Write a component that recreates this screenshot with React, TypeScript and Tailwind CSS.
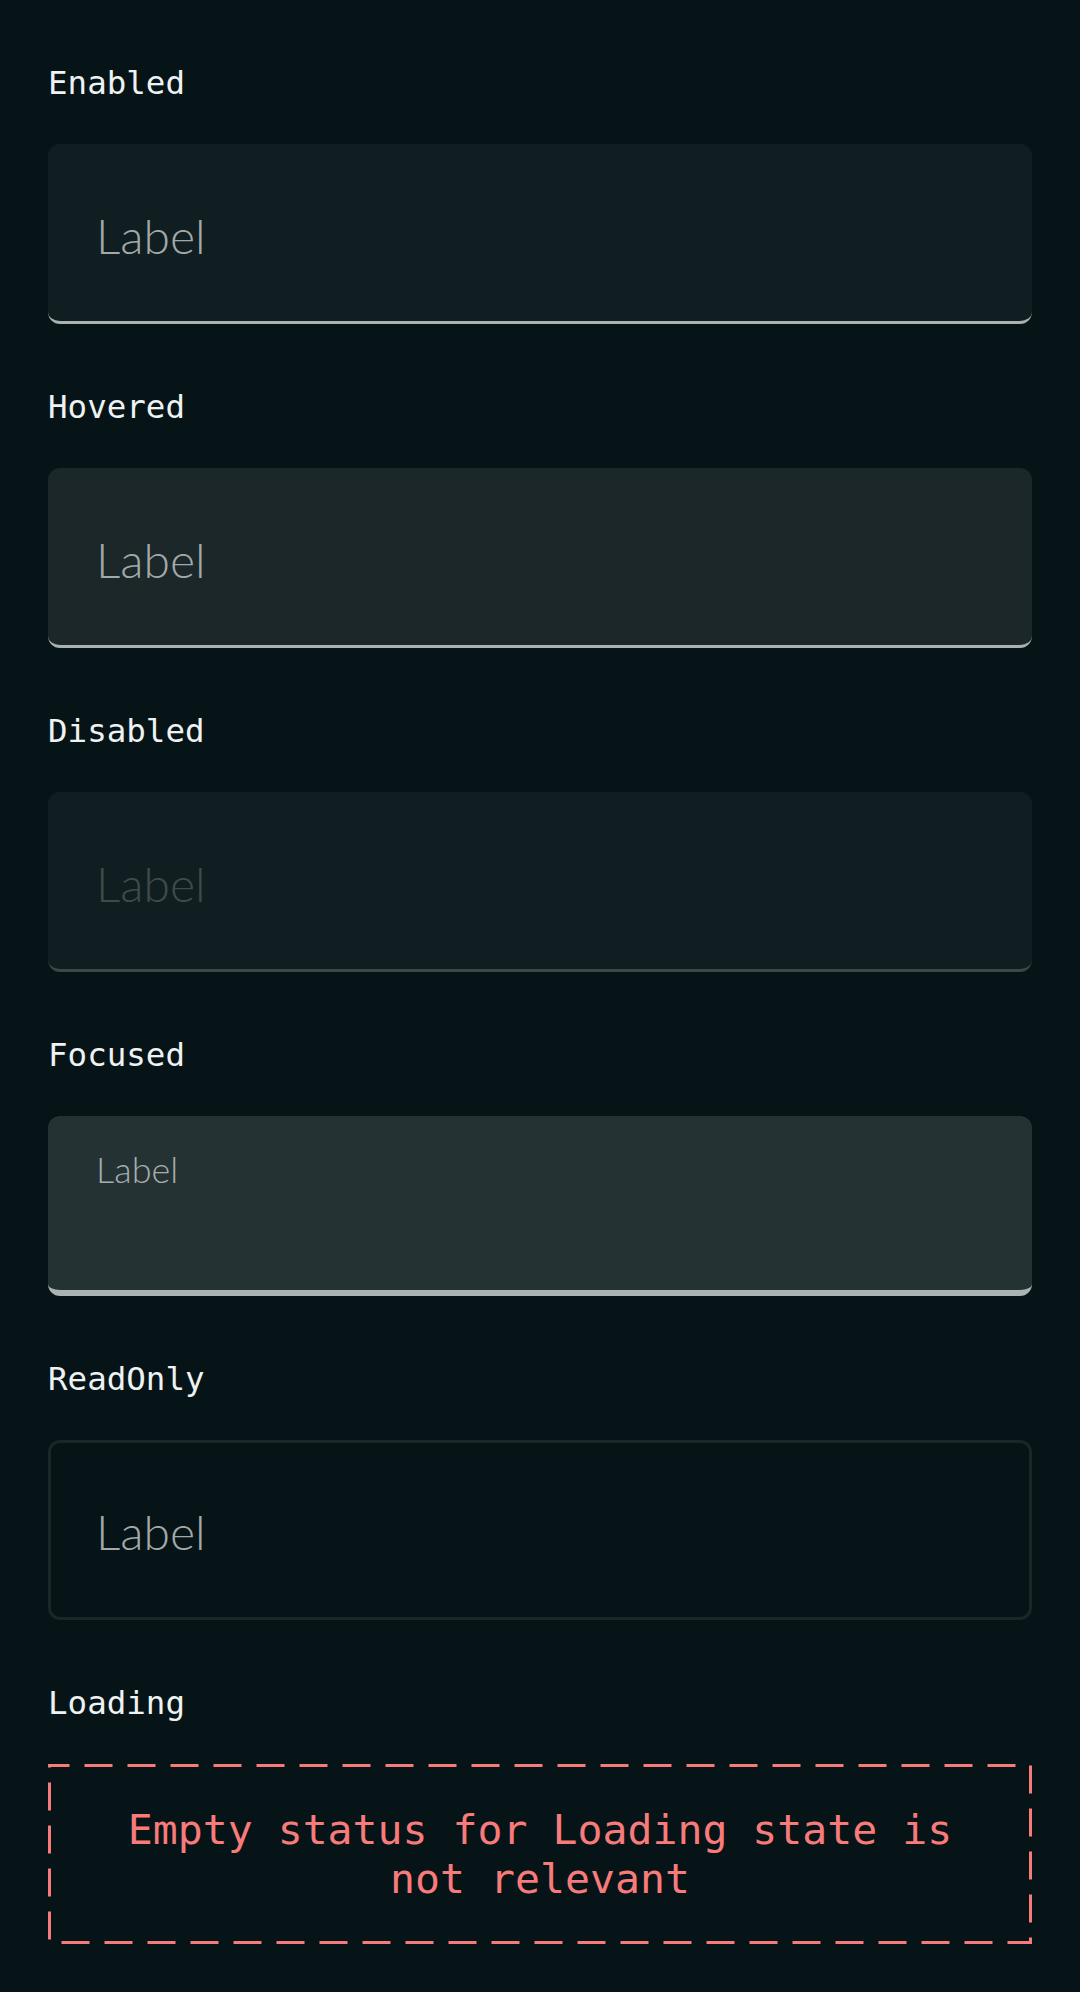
import type { ReactNode } from "react";

const mono = { fontFamily: '"DejaVu Sans Mono", "Liberation Mono", monospace' };
const sans = { fontFamily: 'Lato, "Open Sans", sans-serif' };

function StateSection({ title, children }: { title: string; children: ReactNode }) {
  return (
    <section className="flex flex-col">
      <div className="text-[32.5px] leading-[48px] text-[#eef2f2] h-[48px]" style={mono}>
        {title}
      </div>
      <div className="mt-[37px]">{children}</div>
    </section>
  );
}

type FieldVariant = "enabled" | "hovered" | "disabled" | "focused" | "readonly";

function TextField({ variant }: { variant: FieldVariant }) {
  const boxClass = {
    enabled: "bg-[#111e21] border-b-[3px] border-[#a9b1b1]",
    hovered: "bg-[#1b2729] border-b-[3px] border-[#a9b1b1]",
    disabled: "bg-[#111e21] border-b-[3px] border-[#3c4848]",
    focused: "bg-[#243234] border-b-[6px] border-[#a9b3b3]",
    readonly: "bg-transparent border-[3px] border-[#1a2728]",
  }[variant];

  const focused = variant === "focused";

  return (
    <div className={`h-[180px] rounded-[12px] flex flex-col ${boxClass}`}>
      {focused ? (
        <span className="pl-12 pt-[35px] text-[36px] leading-[36px] font-light text-[#a7adad]" style={sans}>
          Label
        </span>
      ) : (
        <span
          className={`${variant === "readonly" ? "pt-[65px] pl-[45px]" : "pt-[68px] pl-12"} text-[48px] leading-[48px] font-light ${
            variant === "disabled" ? "text-[#3f4b4b]" : "text-[#a3a9a9]"
          }`}
          style={sans}
        >
          Label
        </span>
      )}
    </div>
  );
}

function EmptyNotice({ text }: { text: string }) {
  return (
    <div className="relative h-[180px] flex items-center justify-center px-14">
      <svg className="absolute inset-0" width="984" height="180" viewBox="0 0 984 180">
        <rect
          x="1.5"
          y="1.5"
          width="981"
          height="177"
          fill="none"
          stroke="#f77b7b"
          strokeWidth="3"
          strokeDasharray="28 15"
          strokeDashoffset="8"
        />
      </svg>
      <p className="text-[41.5px] leading-[49px] text-center text-[#f77b7b]" style={mono}>
        {text}
      </p>
    </div>
  );
}

export default function App() {
  return (
    <div className="min-h-screen bg-[#071417] px-12 pt-[59px] pb-[49px]">
      <div className="flex flex-col gap-[59px]">
        <StateSection title="Enabled">
          <TextField variant="enabled" />
        </StateSection>
        <StateSection title="Hovered">
          <TextField variant="hovered" />
        </StateSection>
        <StateSection title="Disabled">
          <TextField variant="disabled" />
        </StateSection>
        <StateSection title="Focused">
          <TextField variant="focused" />
        </StateSection>
        <StateSection title="ReadOnly">
          <TextField variant="readonly" />
        </StateSection>
        <StateSection title="Loading">
          <EmptyNotice text="Empty status for Loading state is not relevant" />
        </StateSection>
      </div>
    </div>
  );
}
